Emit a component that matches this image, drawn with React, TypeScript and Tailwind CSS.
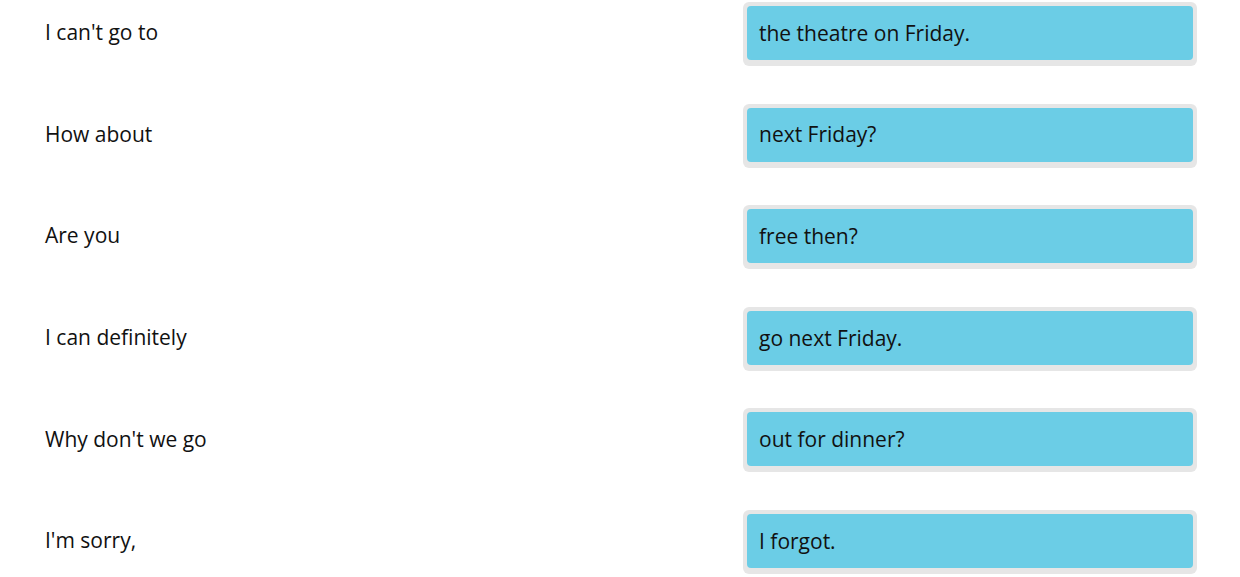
import React from 'react';

interface Pair {
  start: string;
  end: string;
}

const pairs: Pair[] = [
  { start: "I can't go to", end: 'the theatre on Friday.' },
  { start: 'How about', end: 'next Friday?' },
  { start: 'Are you', end: 'free then?' },
  { start: 'I can definitely', end: 'go next Friday.' },
  { start: "Why don't we go", end: 'out for dinner?' },
  { start: "I'm sorry,", end: 'I forgot.' },
];

export default function App() {
  return (
    <div
      className="w-[1240px] h-[577px] bg-white overflow-hidden pt-[2px]"
      style={{ fontFamily: '"Open Sans", "Noto Sans", sans-serif' }}
    >
      <div className="grid grid-rows-[repeat(6,101.6px)]">
        {pairs.map((p, i) => (
          <div key={i} className="flex items-start">
            <div className="w-[743px] pl-[45px] h-[62px] flex items-center text-[21px] text-[#111]">
              {p.start}
            </div>
            <div className="w-[454px] rounded-md bg-[#e6e6e6] p-1 pb-[6px]">
              <div className="h-[54px] rounded bg-[#6bcde6] flex items-center px-3 pt-px text-[21px] text-[#111]">
                {p.end}
              </div>
            </div>
          </div>
        ))}
      </div>
    </div>
  );
}
